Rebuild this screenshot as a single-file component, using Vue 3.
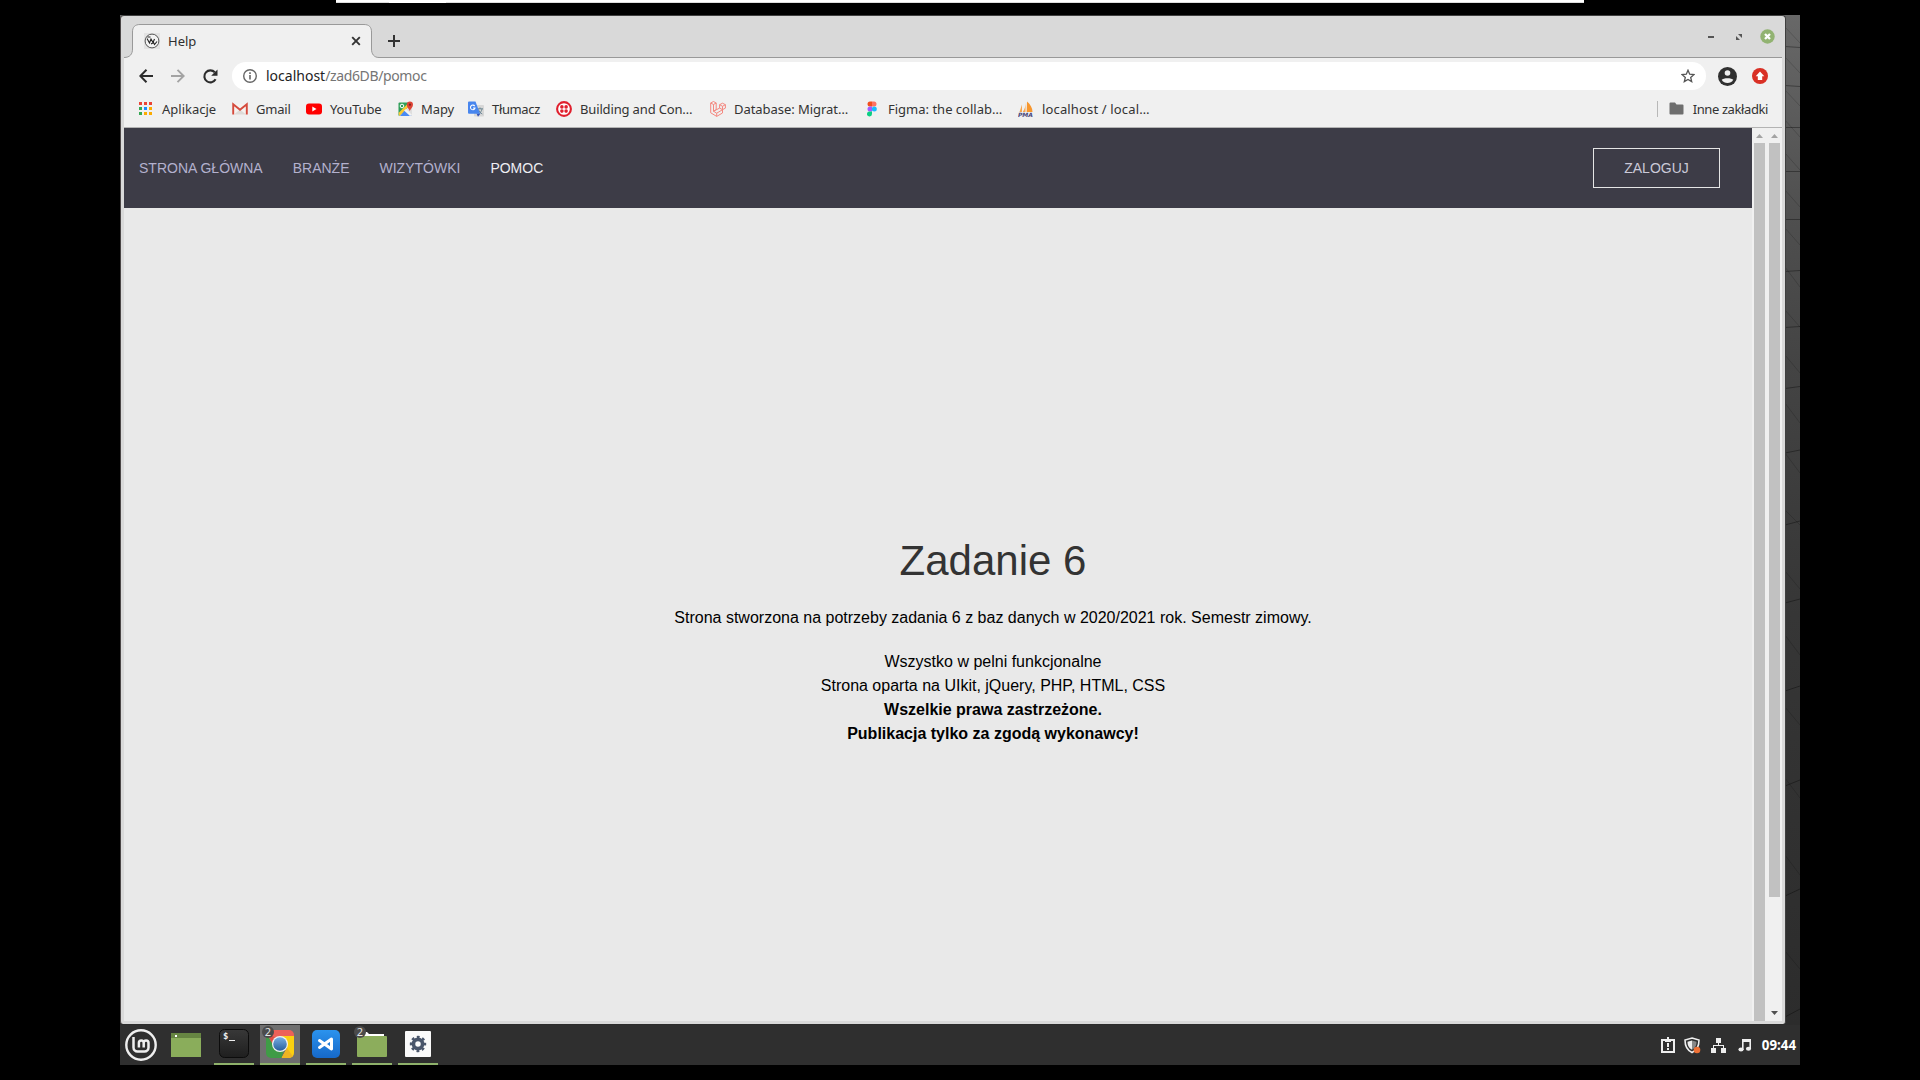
<script setup>
const bookmarks = [
  { id: 'gmail', label: 'Gmail', w: 74, s: -0.2 },
  { id: 'youtube', label: 'YouTube', w: 92, s: -0.15 },
  { id: 'maps', label: 'Mapy', w: 70, s: -0.1 },
  { id: 'translate', label: 'Tłumacz', w: 88, s: -0.35 },
  { id: 'twilio', label: 'Building and Con…', w: 154, s: -0.15 },
  { id: 'laravel', label: 'Database: Migrat…', w: 154, s: -0.05 },
  { id: 'figma', label: 'Figma: the collab…', w: 154, s: 0 },
  { id: 'pma', label: 'localhost / local…', w: 134, s: 0.15 },
]
const nav = ['Strona główna', 'Branże', 'Wizytówki', 'Pomoc']
const dots = ['#ea4335', '#ea4335', '#ea4335', '#34a853', '#1a8cff', '#fbab00', '#34a853', '#fbab00', '#fbab00']
</script>

<template>
  <div class="screen">
    <div class="topstrip"><i></i></div>
    <div class="desktop">
      <svg class="wall" width="15" height="1010" viewBox="0 0 15 1010" fill="none" stroke="#000">
        <path stroke-opacity=".35" d="M0 31.500l15 1M0 70.500l15 1M0 112.500h15M0 156.500h15M0 204.500h15M0 256.500l15 -1M0 312.500l15 -1M0 373.500l15 -2M0 438l15 -3M0 510l15 -4M0 588l15 -4M0 676l15 -5M0 771l15 -6M0 881l15 -7M0 1002l15 -8" />
        <path stroke-opacity=".16" d="M0 12l15 16M0 42l15 16M0 75l15 16M0 105l15 17M0 138l15 17M0 175l15 17M0 213l15 17M0 252l15 20M0 295l15 17M0 340l15 18M0 388l15 20M0 438l15 20M0 495l15 15M0 556l15 18M0 620l15 20M0 692l15 18M0 763l15 20M0 840l15 20M0 936l15 18" />
      </svg>
      <section class="window">
        <header class="tabs">
          <svg class="tabshape" width="255" height="35" viewBox="0 0 255 35">
            <path d="M0 34.500C6 34.500 8.500 31 8.500 26V9C8.500 4 11 1.500 16 1.500H240C245 1.500 247.500 4 247.500 9V26C247.500 31 250 34.500 255 34.500V35H0Z" fill="#f0f0f0" />
            <path d="M0 34.500C6 34.500 8.500 31 8.500 26V9C8.500 4 11 1.500 16 1.500H240C245 1.500 247.500 4 247.500 9V26C247.500 31 250 34.500 255 34.500" fill="none" stroke="#999" />
          </svg>
          <div class="tab">
            <svg width="16" height="16" viewBox="0 0 16 16"><rect width="16" height="16" fill="#e3e3e3" /><circle cx="8" cy="8" r="6.900" fill="#f4f4f4" stroke="#444" stroke-width=".9" /><path d="M3 5.500l2.500 4.500 1.500-4 2 3.500L10.500 6M7 11l2.500-1.500 1 2L13 8.500M3.500 4h3" stroke="#222" stroke-width="1.100" fill="none" /></svg>
            <span class="ttl">Help</span>
            <svg width="10" height="10" viewBox="0 0 10 10"><path d="M1.200 1.200l7.600 7.600M8.800 1.200L1.200 8.800" stroke="#333" stroke-width="1.900" /></svg>
          </div>
          <svg class="plus" width="12" height="12" viewBox="0 0 12 12"><path d="M6 0v12M0 6h12" stroke="#333" stroke-width="2" /></svg>
          <div class="winbtns">
            <svg width="6" height="14" viewBox="0 0 6 14"><path d="M0 7h6" stroke="#555" stroke-width="2" /></svg>
            <svg width="8" height="14" viewBox="0 0 8 14"><path d="M3 4h4v4zM1 6v4h4z" fill="#555" /></svg>
            <svg width="15" height="15" viewBox="0 0 15 15"><circle cx="7.500" cy="7.500" r="7.200" fill="#92b372" /><path d="M5 5l5 5M10 5l-5 5" stroke="#fff" stroke-width="2.300" /></svg>
          </div>
        </header>

        <div class="toolbar">
          <svg width="14" height="14" viewBox="0 0 14 14" fill="none" stroke="#2c2c2c" stroke-width="2"><path d="M14 7H1.500M7.500 .8L1.300 7l6.200 6.200" /></svg>
          <svg width="14" height="14" viewBox="0 0 14 14" fill="none" stroke="#a3a3a3" stroke-width="1.900"><path d="M0 7h12.500M6.500 .8L12.700 7l-6.200 6.200" /></svg>
          <svg width="15" height="15" viewBox="0 0 15 15"><path d="M12.600 10.300A6 6 0 1 1 11.800 3.300" fill="none" stroke="#2c2c2c" stroke-width="2.100" /><path d="M14.500 .5V6.800H8.200z" fill="#2c2c2c" /></svg>
          <div class="url">
            <svg width="14" height="14" viewBox="0 0 14 14"><circle cx="7" cy="7" r="6.300" fill="none" stroke="#666" stroke-width="1.400" /><path d="M7 6v4.500M7 3.300v1.600" stroke="#666" stroke-width="1.600" /></svg>
            <span class="addr"><b>localhost</b>/zad6DB/pomoc</span>
            <svg width="14" height="14" viewBox="0 0 14 14"><path d="M7 1.200l1.700 4 4.300.4-3.300 2.800 1 4.200L7 10.400l-3.700 2.200 1-4.200L1 5.600l4.300-.4z" fill="none" stroke="#555" stroke-width="1.300" /></svg>
          </div>
          <svg class="user" width="19" height="19" viewBox="0 0 19 19"><circle cx="9.500" cy="9.500" r="9.500" fill="#303030" /><circle cx="9.500" cy="6" r="2.800" fill="#f0f0f0" /><path d="M3.700 12.700C5 10.600 14 10.600 15.300 12.700 13 17 6 17 3.700 12.700z" fill="#f0f0f0" /></svg>
          <svg class="upd" width="16" height="16" viewBox="0 0 16 16"><circle cx="8" cy="8" r="8" fill="#d93025" /><path d="M8 3.500l4.300 4.700h-2.100V12H5.800V8.200H3.700z" fill="#fff" /></svg>
        </div>

        <div class="marks">
          <div class="apps"><span class="dots"><i v-for="(c, i) in dots" :key="i" :style="{ background: c }"></i></span><span>Aplikacje</span></div>
          <div v-for="b in bookmarks" :key="b.id" class="mark" :style="{ width: b.w + 'px', letterSpacing: b.s + 'px' }">
            <svg width="16" height="16" viewBox="0 0 16 16">
              <g v-if="b.id === 'gmail'"><path d="M2 3h12v10.500H2z" fill="#f5f2f0" /><path d="M2 13.500l6-5 6 5z" fill="#dedad7" /><path d="M1.200 13.500V3.300L8 8.700l6.800-5.400v10.200" fill="none" stroke="#d54b3d" stroke-width="1.900" /></g>
              <g v-else-if="b.id === 'youtube'"><rect y="2.500" width="16" height="11" rx="3" fill="#f00" /><path d="M6.300 5.600v4.800L10.500 8z" fill="#fff" /></g>
              <g v-else-if="b.id === 'maps'"><rect x=".5" y="1.500" width="13.500" height="13.500" rx="1" fill="#2f9e58" /><path d="M14 2L1 15h13z" fill="#dedede" /><path d="M7 8.600L13.500 15H2z" fill="#4a8af4" /><path d="M.5 12l10-10 1.500 2L1.500 15z" fill="#fbc932" /><path d="M6 9.500L8 8l6 6-2 1z" fill="#f3f3f3" /><circle cx="4" cy="5" r="1.800" fill="none" stroke="#fff" /><path d="M11.800 10C11 7.500 8.800 6.500 8.800 3.700a3.100 3.100 0 0 1 6.200 0C15 6.500 12.500 7.500 11.800 10z" fill="#de4436" /><circle cx="11.900" cy="3.700" r="1.100" fill="#7b231e" /></g>
              <g v-else-if="b.id === 'translate'"><rect x="6" y="4" width="10" height="11.500" rx="1" fill="#d7d7d7" /><path d="M9 7.800h6M12 6.500v1.300M14 8c-.5 2.500-2 4-3.500 5M10.500 8.500c.5 2 2 3.500 3.800 4.500" stroke="#63808c" stroke-width=".9" fill="none" /><path d="M8.500 12.500h4L10 15.800z" fill="#3454b8" /><path d="M1 .5h6.500L12 12.800H1a1 1 0 0 1-1-1V1.500a1 1 0 0 1 1-1z" fill="#4886ee" /><path d="M6.700 5.100A2.300 2.300 0 1 0 7 7H5" fill="none" stroke="#fff" stroke-width="1.100" /></g>
              <g v-else-if="b.id === 'twilio'"><circle cx="8" cy="8" r="6.900" fill="#fff" stroke="#e01f2d" stroke-width="2.100" /><g fill="#e01f2d"><circle cx="5.900" cy="5.900" r="1.800" /><circle cx="10.100" cy="5.900" r="1.800" /><circle cx="5.900" cy="10.100" r="1.800" /><circle cx="10.100" cy="10.100" r="1.800" /></g></g>
              <g v-else-if="b.id === 'laravel'" fill="none" stroke="#f4877f" stroke-width="1"><path d="M.7 2l2.800-1.500L6.200 2v6.700l-2.700 1.500M.7 2v9.800l6 3.600 5.800-3.400V8.700M.7 2l2.800 1.500v6.700l3.200 2v3.200M3.500 3.500L6.200 2M9.600 3.700l2.900-1.500 2.900 1.500v3.400l-2.900 1.600-2.900-1.600zM9.600 3.700l2.900 1.600 2.900-1.600M12.500 5.300v3.400l-5.800 3.500M9.600 7.100l-6.100 3.100" /></g>
              <g v-else-if="b.id === 'figma'"><path d="M8 .5H6a2.500 2.500 0 0 0 0 5h2z" fill="#f24e1e" /><path d="M8 .5h2a2.500 2.500 0 0 1 0 5H8z" fill="#ff7262" /><path d="M8 5.500H6a2.500 2.500 0 0 0 0 5h2z" fill="#a259ff" /><circle cx="10.300" cy="8" r="2.500" fill="#1abcfe" /><path d="M8 10.500H6A2.500 2.500 0 1 0 8 13z" fill="#0acf83" /></g>
              <g v-else><path d="M4 3.500L1.500 11H4zM7.500 1v10H4.700C7 8 7.500 5 7.500 1z" fill="#f5a54d" /><path d="M9 .5c3.500 3 5.500 6.500 5.500 10.500H8.700z" fill="#f7962d" /><text x="0" y="15.700" class="pma" textLength="15">PMA</text></g>
            </svg>
            <span>{{ b.label }}</span>
          </div>
          <div class="other">
            <svg width="15" height="13" viewBox="0 0 15 13"><path d="M1.500.5H6l1.500 2h6A1 1 0 0 1 14.500 3.500v8a1 1 0 0 1-1 1h-12a1 1 0 0 1-1-1v-10a1 1 0 0 1 1-1z" fill="#6e6e6e" /></svg>
            <span>Inne zakładki</span>
          </div>
        </div>

        <div class="view">
          <div class="page">
            <nav><a v-for="(n, i) in nav" :key="n" :class="{ on: i === 3 }">{{ n }}</a><button>Zaloguj</button></nav>
            <main>
              <h1>Zadanie 6</h1>
              <p>Strona stworzona na potrzeby zadania 6 z baz danych w 2020/2021 rok. Semestr zimowy.</p>
              <p>Wszystko w pelni funkcjonalne<br />Strona oparta na UIkit, jQuery, PHP, HTML, CSS<br /><strong>Wszelkie prawa zastrzeżone.</strong><br /><strong>Publikacja tylko za zgodą wykonawcy!</strong></p>
            </main>
          </div>
          <div class="bar"><svg width="7" height="4" viewBox="0 0 7 4"><path d="M0 4L3.500 0 7 4z" fill="#a3a3a3" /></svg><i></i></div>
          <div class="bar outer"><svg width="7" height="4" viewBox="0 0 7 4"><path d="M0 4L3.500 0 7 4z" fill="#a3a3a3" /></svg><i></i><svg class="dn" width="7" height="4" viewBox="0 0 7 4"><path d="M0 0h7L3.500 4z" fill="#505050" /></svg></div>
        </div>
      </section>

      <footer class="panel">
        <div class="app menu"><svg width="34" height="34" viewBox="0 0 34 34"><circle cx="17" cy="17" r="14.700" fill="none" stroke="#efefef" stroke-width="2.400" /><path d="M9.500 9v10.500a4 4 0 0 0 4 4h7a4 4 0 0 0 4-4v-4.700a2.400 2.400 0 0 0-4.800 0v4.700v-4.700a2.400 2.400 0 0 0-4.800 0v4.700" fill="none" stroke="#efefef" stroke-width="2.500" /></svg></div>
        <div class="app desk"><svg width="30" height="24" viewBox="0 0 30 24"><rect width="30" height="24" fill="#8aad5b" /><rect width="30" height="5" fill="#668542" /><rect x="4" y="2" width="2" height="2" fill="#fff" /></svg></div>
        <div class="app run"><svg width="30" height="30" viewBox="0 0 30 30"><defs><linearGradient id="tm" x2="0" y2="1"><stop stop-color="#383838" /><stop offset="1" stop-color="#1f1f1f" /></linearGradient></defs><rect x=".5" y=".5" width="29" height="28" rx="5" fill="url(#tm)" stroke="#0c0c0c" /><text x="4" y="10" class="prompt">$</text><path d="M10 11.500h6" stroke="#eee" /></svg></div>
        <div class="app run active"><svg width="30" height="30" viewBox="0 0 30 30"><defs><clipPath id="cr"><rect x="1" y="1" width="28" height="28" rx="5" /></clipPath><linearGradient id="cb" x2="0" y2="1"><stop stop-color="#77aee2" /><stop offset="1" stop-color="#285f9e" /></linearGradient></defs><g clip-path="url(#cr)"><path d="M0 0h30v7H15L8 18 0 5z" fill="#ed6158" /><path d="M1 4l8 13 6 5-5 8H0V4z" fill="#3f9c46" /><path d="M15 7h15v23H16l6-11z" fill="#fbd010" /><path d="M0 0l9 18 1-9z" fill="#dd4f45" /><path d="M22 19l-6 11h14z" fill="#eeb422" /><path d="M10 30l5-8 4-1-3 9z" fill="#3f9c46" /></g><circle cx="15" cy="15" r="8" fill="#f2f2f2" /><circle cx="15" cy="15" r="6.800" fill="url(#cb)" /></svg><em>2</em></div>
        <div class="app run"><svg width="30" height="30" viewBox="0 0 30 30"><defs><linearGradient id="vs" x2="0" y2="1"><stop stop-color="#2b93ee" /><stop offset="1" stop-color="#1668c8" /></linearGradient></defs><rect x="1" y="1" width="28" height="28" rx="5" fill="url(#vs)" /><path d="M8.500 11.500L20.500 20V10L8.500 18.500" fill="none" stroke="#fff" stroke-width="3" stroke-linejoin="round" stroke-linecap="round" /></svg></div>
        <div class="app run"><svg width="30" height="26" viewBox="0 0 30 26"><path d="M1 8V3a2 2 0 0 1 2-2h7l2 2h15v5z" fill="#fff" /><rect y="5" width="30" height="21" rx="1" fill="#8cad5c" /></svg><em>2</em></div>
        <div class="app run"><svg width="26" height="26" viewBox="0 0 26 26"><rect width="26" height="26" rx="1" fill="#fafafa" /><circle cx="13" cy="13" r="4.600" fill="none" stroke="#4a566b" stroke-width="3.700" /><circle cx="13" cy="13" r="7" fill="none" stroke="#4a566b" stroke-width="2.400" stroke-dasharray="2.800 2.700" stroke-dashoffset="1.400" /></svg></div>
        <div class="tray">
          <svg width="14" height="16" viewBox="0 0 14 16"><path d="M1 3h12v12H1z" fill="none" stroke="#eee" stroke-width="2" /><path d="M4 2h2V0h2v2h2v3H4z" fill="#eee" /><path d="M7 6v4M7 11v2" stroke="#eee" stroke-width="2" /></svg>
          <svg class="shield" width="17" height="17" viewBox="0 0 17 17"><path d="M8 1L15 3c0 6-1.500 10-7 12.500C2.500 13 1 9 1 3z" fill="#2f2f2f" stroke="#eee" stroke-width="1.600" /><path d="M8 3.500v9.300C4.500 11 3.500 8 3.500 4.700z" fill="#eee" /><path d="M8 3.500l4.500 1.200c0 3.300-1 6.300-4.500 8.100z" fill="#888" /><circle cx="13" cy="13" r="3.300" fill="#ef7135" /></svg>
          <svg class="net" width="15" height="15" viewBox="0 0 15 15" fill="#eee"><path d="M5 0h5v5H5zM0 10h5v5H0zM10 10h5v5h-5z" /><path d="M7 4h1v3h5v4h-1V8H3v3H2V7h5z" /></svg>
          <svg class="note" width="14" height="14" viewBox="0 0 14 14" fill="#eee"><path d="M4 1h9v10h-1.600V4H5.600v8H4z" /><ellipse cx="3" cy="11.500" rx="2.600" ry="2" /><ellipse cx="10.500" cy="10.700" rx="2.600" ry="2" /></svg>
          <time>09:44</time>
        </div>
      </footer>
    </div>
  </div>
</template>

<style>
body { margin: 0; background: #000; }
</style>
<style scoped>
* { box-sizing: border-box; }
svg { display: block; flex: none; }
.screen { width: 1920px; height: 1080px; background: #000; overflow: hidden; font-family: "Noto Sans", sans-serif; }
.topstrip { width: 1248px; height: 3px; margin-left: 336px; background: #fff; border-bottom: 1px solid #ddd; }
.topstrip i { display: block; width: 57px; height: 3px; margin-left: 53px; background: #fff; }
.desktop { position: relative; width: 1680px; height: 1050px; margin: 12px 0 0 120px; display: flex; flex-direction: column; background: linear-gradient(#686868 0, #4f4f4f 200px, #444 350px, #363636 600px, #2c2c2c 1010px); }
.wall { position: absolute; right: 0; top: 0; }
.window { position: relative; width: 1666px; height: 1009px; display: flex; flex-direction: column; padding: 0 3px 3px; margin-bottom: 1px; border: 1px solid #3f3f3f; border-bottom: 0; border-left-color: #4a4545; border-radius: 4px 4px 3px 3px; background: #d9d9d9; }
.tabs { position: relative; height: 42px; flex: none; display: flex; align-items: flex-start; border-bottom: 1px solid #999; }
.tabshape { position: absolute; left: 0; top: 7px; }
.tab { position: relative; width: 217px; margin: 17px 0 0 20px; display: flex; align-items: center; height: 16px; }
.ttl { flex: 1; margin-left: 8px; font-size: 13px; color: #2f2f2f; }
.plus { margin: 19px 0 0 27px; }
.winbtns { margin: 13px 7px 0 auto; display: flex; align-items: center; gap: 17px; }
.winbtns svg:nth-child(2) { margin-left: 4px; }
.toolbar { height: 38px; flex: none; display: flex; align-items: center; background: #f0f0f0; padding: 0 14px 2px 15px; }
.toolbar > svg:nth-child(2), .toolbar > svg:nth-child(3) { margin-left: 18px; }
.url { width: 1474px; height: 28px; margin-left: 14px; display: flex; align-items: center; border-radius: 14px; background: #fff; padding: 0 11px; }
.addr { flex: 1; margin-left: 9px; font-size: 14px; color: #757575; line-height: 28px; letter-spacing: -.37px; }
.addr b { font-weight: 400; color: #222; letter-spacing: 0; }
.toolbar .user { margin-left: 12px; }
.toolbar .upd { margin-left: 15px; }
.marks { height: 32px; flex: none; display: flex; align-items: center; background: #f0f0f0; border-bottom: 1px solid #b3b3b3; padding: 0 14px 6px 15px; font-size: 13px; line-height: 18px; color: #333; white-space: nowrap; }
.apps { width: 93px; display: flex; align-items: center; gap: 10px; }
.dots { width: 13px; display: grid; grid-template-columns: repeat(3, 3px); gap: 2px; }
.dots i { width: 3px; height: 3px; }
.mark { flex: none; display: flex; align-items: center; gap: 8px; }
.mark:nth-child(4) { gap: 7px; }
.pma { font: italic bold 6px "DejaVu Sans", sans-serif; fill: #47457a; }
.other { margin-left: auto; height: 16px; display: flex; align-items: center; gap: 9px; padding-left: 11px; border-left: 1px solid #b8b8b8; letter-spacing: -.4px; }
.view { flex: 1; min-height: 0; display: flex; background: #f0f0f0; }
.page { width: 1628px; flex: none; display: flex; flex-direction: column; background: #e9e9e9; font-family: "Liberation Sans", Arial, sans-serif; }
nav { height: 80px; flex: none; display: flex; align-items: center; gap: 30px; padding: 0 32px 0 15px; background: #3d3c47; color: #b3b1ce; font-size: 14px; text-transform: uppercase; }
nav .on { color: #eeeef3; }
nav button { margin-left: auto; width: 127px; height: 40px; border: 1px solid #e5e5e5; padding: 0; background: none; color: #cbcad8; font: 14px "Liberation Sans", Arial, sans-serif; text-transform: uppercase; }
main { padding: 328px 0 0 110px; text-align: center; color: #000; font-size: 16px; line-height: 24px; }
h1 { margin: 0 0 20px; font-size: 42px; line-height: 50px; font-weight: 400; color: #333; }
p { margin: 0 0 20px; }
.bar { position: relative; width: 15px; display: flex; flex-direction: column; align-items: center; padding-top: 6px; }
.bar i { width: 11px; flex: 1; margin-top: 5px; background: #c1c1c1; }
.outer i { flex: none; height: 754px; }
.outer .dn { margin: auto 0 6px; }
.panel { height: 40px; display: flex; background: #2f2f2f; }
.app { position: relative; width: 40px; height: 40px; margin-right: 6px; display: flex; justify-content: center; align-items: center; }
.menu { width: 42px; margin-right: 4px; }
.desk { margin-right: 8px; }
.run { border-bottom: 2px solid #8fb26b; }
.active { background: #6f6f6f; }
.app em { position: absolute; left: 2px; top: 1px; width: 12px; height: 12px; border-radius: 6px; background: #4b4b4b; color: #e5e5e5; font: 11px/12px "Noto Sans", sans-serif; text-align: center; }
.prompt { font: bold 9px "DejaVu Sans Mono", monospace; fill: #eee; }
.tray { margin-left: auto; display: flex; align-items: center; padding-right: 4px; }
.shield { margin-left: 9px; }
.net { margin-left: 10px; }
.note { margin-left: 12px; }
time { margin-left: 10px; color: #fff; font-weight: 700; font-size: 13.300px; }
</style>
